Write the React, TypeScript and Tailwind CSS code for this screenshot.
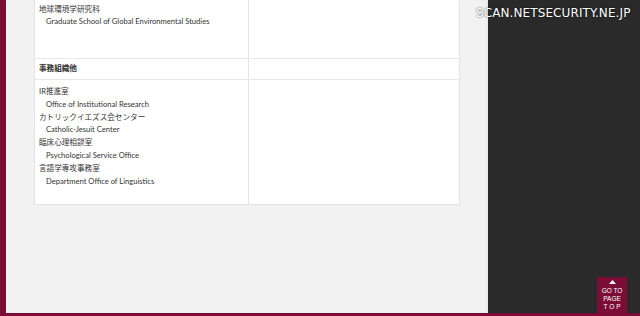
import React from "react";

const font = { fontFamily: 'Lato, "Noto Sans CJK JP", sans-serif' };

function Line({ jp, children }: { jp?: boolean; children: React.ReactNode }) {
  return (
    <div className={jp ? "h-[12.8px] leading-[12.8px]" : "h-[12.8px] leading-[12.8px] pl-[7px]"}>
      {children}
    </div>
  );
}

export default function App() {
  return (
    <div className="relative w-[640px] h-[316px] flex flex-col overflow-hidden bg-[#2a2a2a]" style={font}>
      <div className="flex flex-1 min-h-0">
        <div className="w-[6px] bg-[#7a0c36]" />
        <div className="w-[482px] bg-[#f2f2f2] pl-[28px] shadow-[inset_-2px_0_3px_rgba(0,0,0,0.04)]">
          <div className="w-[426px] bg-white border-x border-b border-[#e3e3e3] text-[7.6px] text-[#333]">
            <div className="flex h-[59px] border-b border-[#e8e8e8]">
              <div className="w-[214px] border-r border-[#e3e3e3] pl-[4px] pt-[2.5px]">
                <Line jp>地球環境学研究科</Line>
                <Line>Graduate School of Global Environmental Studies</Line>
              </div>
              <div className="flex-1" />
            </div>
            <div className="flex h-[21px] border-b border-[#e8e8e8]">
              <div className="w-[214px] border-r border-[#e3e3e3] pl-[4px] flex items-center font-bold">
                事務組織他
              </div>
              <div className="flex-1" />
            </div>
            <div className="flex h-[124px]">
              <div className="w-[214px] border-r border-[#e3e3e3] pl-[4px] pt-[5px]">
                <Line jp>IR推進室</Line>
                <Line>Office of Institutional Research</Line>
                <Line jp>カトリックイエズス会センター</Line>
                <Line>Catholic-Jesuit Center</Line>
                <Line jp>臨床心理相談室</Line>
                <Line>Psychological Service Office</Line>
                <Line jp>言語学専攻事務室</Line>
                <Line>Department Office of Linguistics</Line>
              </div>
              <div className="flex-1" />
            </div>
          </div>
        </div>
        <div className="flex-1 bg-[#2a2a2a]" />
      </div>
      <div className="h-[3px] bg-[#7a0c36]" />
      <div
        className="absolute left-[476px] top-[4px] text-[12px] text-white [text-shadow:0_0_2px_rgba(0,0,0,0.8)]"
        style={{ fontFamily: '"DejaVu Sans", sans-serif', letterSpacing: "0.1px" }}
      >
        SCAN.NETSECURITY.NE.JP
      </div>
      <div className="absolute left-[597px] top-[277px] w-[30px] h-[37px] bg-[#7a0c36] flex flex-col items-center pt-[3px] text-white text-[6.5px] leading-[8px]" style={{ fontFamily: '"Liberation Sans", sans-serif' }}>
        <svg width="7" height="4" viewBox="0 0 7 4" className="mb-[3px]">
          <polygon points="3.5,0 7,4 0,4" fill="white" />
        </svg>
        <div>GO TO</div>
        <div>PAGE</div>
        <div className="tracking-[2px] pl-[2px]">TOP</div>
      </div>
    </div>
  );
}
